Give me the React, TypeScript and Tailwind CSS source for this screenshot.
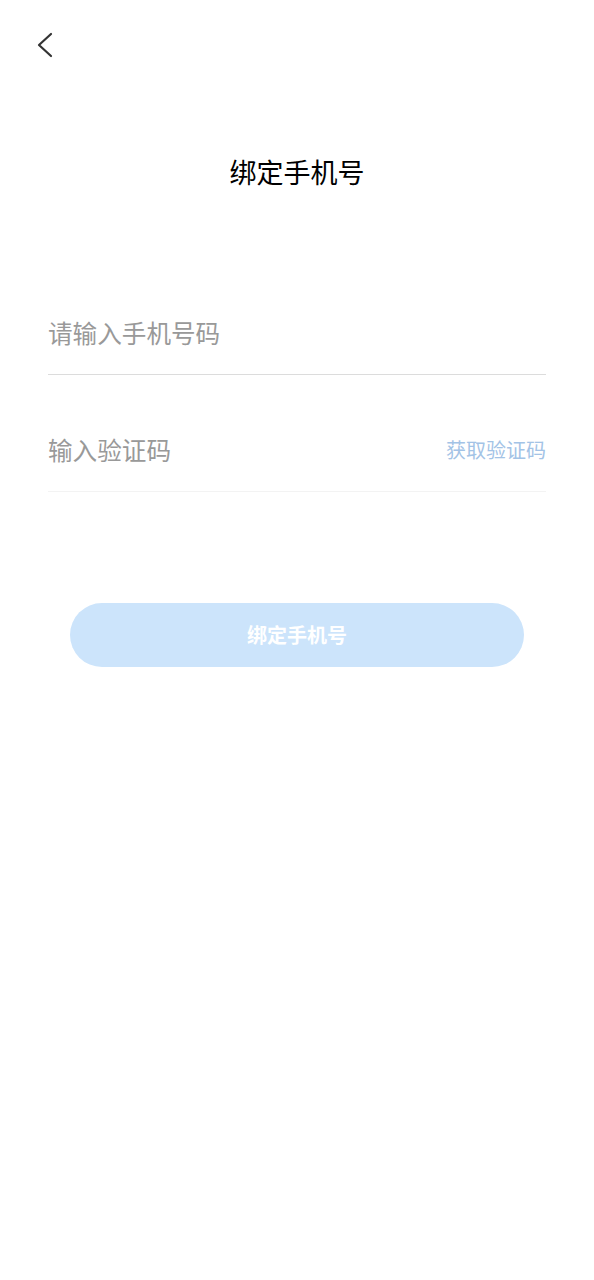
import React from "react";

const font = { fontFamily: '"Noto Sans CJK SC", "Noto Sans", sans-serif' };

export default function App() {
  const [phone, setPhone] = React.useState("");
  const [code, setCode] = React.useState("");

  return (
    <div className="min-h-[1280px] w-full bg-white" style={font}>
      {/* header */}
      <div className="h-[88px] px-[36px] pt-[30px]">
        <button className="flex h-[30px] w-[20px] items-center">
          <svg width="18" height="28" viewBox="0 0 18 28" fill="none">
            <path d="M15 3 L3 14 L15 25" stroke="#333" strokeWidth="2.2" strokeLinecap="round" strokeLinejoin="round" />
          </svg>
        </button>
      </div>

      <h1 className="mt-[66px] text-center text-[27px] leading-[36px] text-black">绑定手机号</h1>

      <div className="mt-[101px] px-[48px]">
        <div className="flex h-[84px] items-center border-b border-[#dcdcdc]">
          <input
            value={phone}
            onChange={(e) => setPhone(e.target.value)}
            placeholder="请输入手机号码"
            className="w-full bg-transparent text-[24.6px] text-[#333] outline-none placeholder:text-[#999]"
            style={font}
          />
        </div>
        <div className="mt-[33px] flex h-[84px] items-center border-b border-[#f3f3f3]">
          <input
            value={code}
            onChange={(e) => setCode(e.target.value)}
            placeholder="输入验证码"
            className="min-w-0 flex-1 bg-transparent text-[24.6px] text-[#333] outline-none placeholder:text-[#999]"
            style={font}
          />
          <span className="shrink-0 text-[20px] text-[#a3c3e6]">获取验证码</span>
        </div>
      </div>

      <div className="mt-[111px] px-[70px]">
        <button className="h-[64px] w-full rounded-full bg-[#cce4fb] text-[20px] font-bold text-white">
          绑定手机号
        </button>
      </div>
    </div>
  );
}
